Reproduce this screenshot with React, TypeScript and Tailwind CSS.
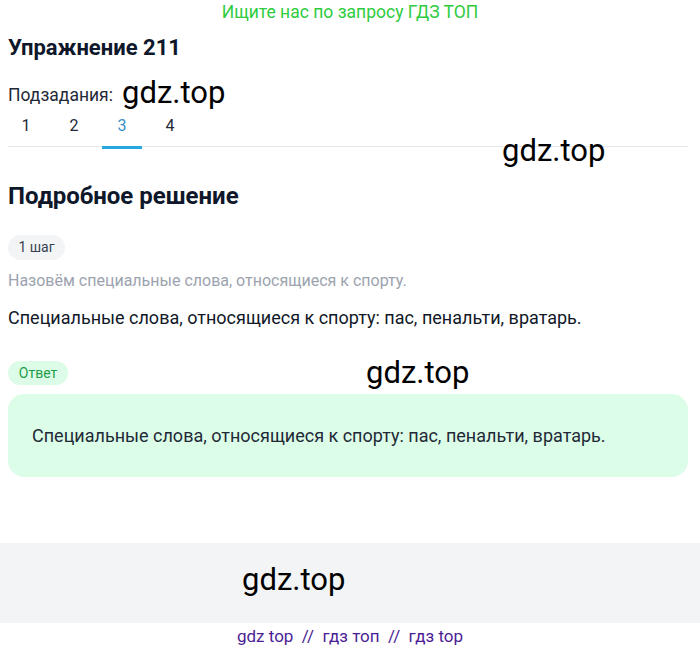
const tabs = ["1", "2", "3", "4"];

function Watermark({ className = "" }: { className?: string }) {
  return (
    <span className={`pointer-events-none absolute whitespace-nowrap font-['Roboto',sans-serif] text-[31px] leading-none text-black ${className}`}>
      gdz.top
    </span>
  );
}

export default function App() {
  return (
    <div className="relative min-h-[650px] w-[700px] bg-white font-['Roboto',sans-serif] text-[#111827]">
      <p className="text-center text-[17.5px] leading-[24px] text-[#2ecc40]">Ищите нас по запросу ГДЗ ТОП</p>

      <div className="pl-2 pr-3">
        <h1 className="mt-[10px] text-[22px] font-bold leading-[28px] text-[#0f172a]">Упражнение 211</h1>

        <div className="relative mt-[21px] flex h-6 items-center">
          <span className="text-[17.5px] leading-[24px] text-[#1f2937]">Подзадания:</span>
          <Watermark className="left-[114px] top-[-6px]" />
        </div>

        <div className="relative h-[40px] border-b border-[#e5e7eb]">
          <div className="-ml-[2px] flex gap-2">
            {tabs.map((t) => (
              <div
                key={t}
                className={`relative h-[39px] w-10 pt-[7px] text-center text-[16px] leading-[24px] ${
                  t === "3" ? "text-[#3a8fc7]" : "text-[#1f2937]"
                }`}
              >
                {t}
                {t === "3" && <span className="absolute bottom-[-3px] left-0 h-[3px] w-10 bg-[#26a9e0]" />}
              </div>
            ))}
          </div>
          <Watermark className="left-[494px] top-[28px]" />
        </div>

        <h2 className="mt-[34px] text-[24px] font-bold leading-[30px] text-[#0f172a]">Подробное решение</h2>

        <div className="mt-[24px] flex h-[25px] w-[57px] items-center justify-center rounded-full bg-[#f3f4f6] text-[14px] text-[#374151]">
          1 шаг
        </div>

        <p className="mt-[9px] text-[16px] leading-[24px] text-[#9ca3af]">Назовём специальные слова, относящиеся к спорту.</p>
        <p className="mt-[12px] text-[18px] leading-[26px] text-[#111827]">
          Специальные слова, относящиеся к спорту: пас, пенальти, вратарь.
        </p>

        <div className="relative mt-[30px]">
          <div className="flex h-[24px] w-[60px] items-center justify-center rounded-full bg-[#dcfce7] text-[14px] text-[#1f9d4a]">
            Ответ
          </div>
          <Watermark className="left-[358px] top-[-4px]" />
        </div>

        <div className="mt-[9px] flex h-[83px] items-center rounded-2xl bg-[#dcfde8] px-6">
          <p className="text-[18px] leading-[26px] text-[#1f2937]">
            Специальные слова, относящиеся к спорту: пас, пенальти, вратарь.
          </p>
        </div>
      </div>

      <div className="relative mt-[66px] h-[80px] bg-[#f3f4f6]">
        <Watermark className="left-[242px] top-[21px]" />
      </div>

      <p className="mt-[1px] text-center text-[17px] leading-[24px] text-[#4c1d95]">
        gdz top&nbsp; //&nbsp; гдз топ&nbsp; //&nbsp; гдз top
      </p>
    </div>
  );
}
